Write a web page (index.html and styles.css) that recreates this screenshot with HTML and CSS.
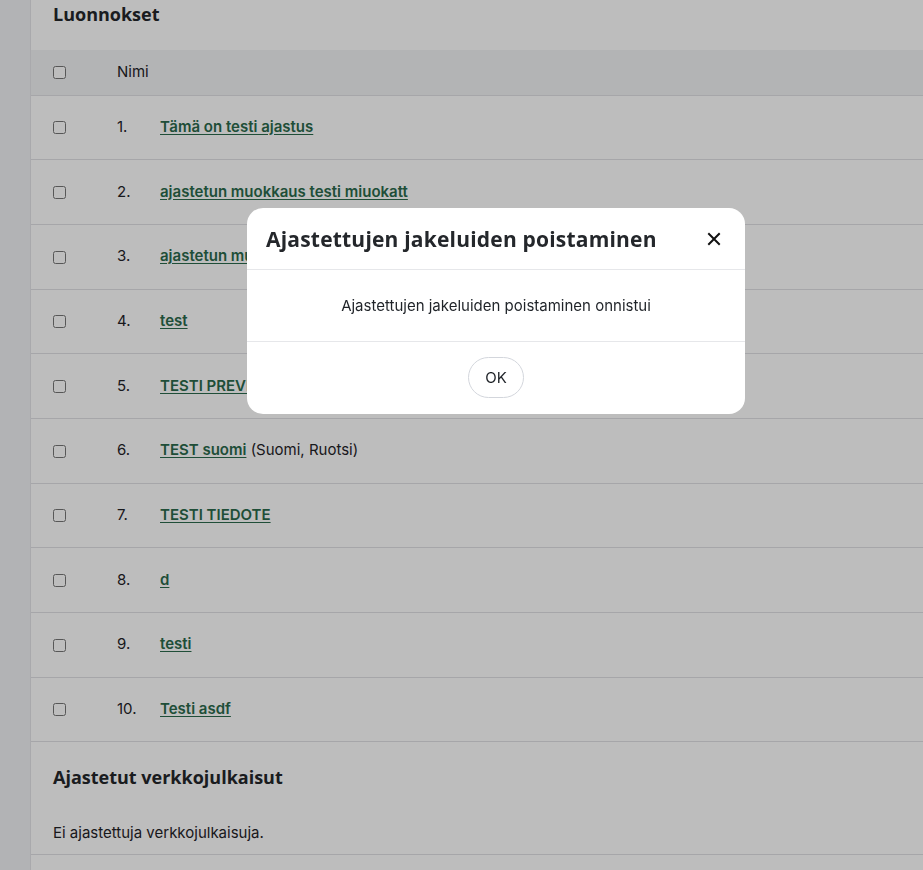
FILE: index.html
```html
<!DOCTYPE html>
<html lang="fi">
  <head>
    <meta charset="UTF-8" />
    <meta name="viewport" content="width=device-width, initial-scale=1.0" />
    <title>Luonnokset</title>
    <link rel="stylesheet" href="styles.css">
  </head>
  <body>
    <div class="layout">
      <aside class="sidebar"></aside>

      <main class="content">
        <!-- Drafts -->
        <section class="drafts">
          <h2 class="section-title">Luonnokset</h2>
          <table class="list">
            <thead>
              <tr>
                <th class="col-check"><input type="checkbox" /></th>
                <th class="col-num">Nimi</th>
                <th></th>
              </tr>
            </thead>
            <tbody>
              <tr><td class="col-check"><input type="checkbox" /></td><td class="col-num">1.</td><td><a href="#">Tämä on testi ajastus</a></td></tr>
              <tr><td class="col-check"><input type="checkbox" /></td><td class="col-num">2.</td><td><a href="#">ajastetun muokkaus testi miuokatt</a></td></tr>
              <tr><td class="col-check"><input type="checkbox" /></td><td class="col-num">3.</td><td><a href="#">ajastetun muokkaus testi</a></td></tr>
              <tr><td class="col-check"><input type="checkbox" /></td><td class="col-num">4.</td><td><a href="#">test</a></td></tr>
              <tr><td class="col-check"><input type="checkbox" /></td><td class="col-num">5.</td><td><a href="#">TESTI PREVIEW</a></td></tr>
              <tr><td class="col-check"><input type="checkbox" /></td><td class="col-num">6.</td><td><a href="#">TEST suomi</a> (Suomi, Ruotsi)</td></tr>
              <tr><td class="col-check"><input type="checkbox" /></td><td class="col-num">7.</td><td><a href="#">TESTI TIEDOTE</a></td></tr>
              <tr><td class="col-check"><input type="checkbox" /></td><td class="col-num">8.</td><td><a href="#">d</a></td></tr>
              <tr><td class="col-check"><input type="checkbox" /></td><td class="col-num">9.</td><td><a href="#">testi</a></td></tr>
              <tr><td class="col-check"><input type="checkbox" /></td><td class="col-num">10.</td><td><a href="#">Testi asdf</a></td></tr>
            </tbody>
          </table>
        </section>

        <!-- Scheduled web publications -->
        <section class="scheduled">
          <h2 class="section-title">Ajastetut verkkojulkaisut</h2>
          <p class="empty">Ei ajastettuja verkkojulkaisuja.</p>
        </section>
      </main>
    </div>

    <!-- Modal -->
    <div class="overlay">
      <div class="modal">
        <div class="modal-header">
          <h3>Ajastettujen jakeluiden poistaminen</h3>
          <button class="close-button" aria-label="Sulje">
            <svg width="14" height="14" viewBox="0 0 14 14">
              <path d="M2 2 L12 12 M12 2 L2 12" stroke="#111" stroke-width="2" stroke-linecap="square" fill="none" />
            </svg>
          </button>
        </div>
        <div class="modal-body">Ajastettujen jakeluiden poistaminen onnistui</div>
        <div class="modal-footer">
          <button class="ok-btn">OK</button>
        </div>
      </div>
    </div>
  </body>
</html>
```

FILE: styles.css
```css
/* General Styles */
body {
  margin: 0;
  padding: 0;
  font-family: Inter, "Noto Sans", sans-serif;
  font-size: 15px;
  color: #1f2328;
  background: #ffffff;
  overflow: hidden;
}

.layout {
  display: flex;
  min-height: 100vh;
}

.sidebar {
  width: 30px;
  flex-shrink: 0;
  background-color: #f1f2f4;
  border-right: 1px solid #e4e5e8;
}

.content {
  flex: 1;
  background-color: #ffffff;
}

.section-title {
  font-family: "Open Sans", Inter, sans-serif;
  font-size: 18px;
  font-weight: 700;
  color: #24272b;
  margin: 0;
  padding: 0 22px;
}

/* Drafts list */
.drafts .section-title {
  height: 50px;
  line-height: 29px;
}

.list {
  width: 100%;
  border-collapse: collapse;
}

.list th,
.list td {
  text-align: left;
  padding: 0 0 2px 0;
  border-bottom: 1px solid #e0e1e4;
  vertical-align: middle;
}

.list thead tr {
  background-color: #f2f3f5;
  height: 45px;
}

.list th {
  font-weight: 400;
}

.list tbody tr {
  height: 64.7px;
}

.col-check {
  width: 64px;
  padding-left: 22px !important;
}

.col-num {
  width: 43px;
}

.list input[type="checkbox"] {
  margin: 0;
  width: 13px;
  height: 13px;
  vertical-align: middle;
}

.list a {
  color: #2b6a4c;
  font-weight: 600;
  text-decoration: underline;
  text-underline-offset: 2px;
}

/* Scheduled section */
.scheduled .section-title {
  padding-top: 23px;
  line-height: 24px;
}

.empty {
  margin: 0;
  padding: 34px 22px 11px;
  line-height: 20px;
  border-bottom: 1px solid #e0e1e4;
}

/* Modal */
.overlay {
  position: fixed;
  inset: 0;
  background-color: rgba(0, 0, 0, 0.26);
}

.modal {
  position: absolute;
  top: 208px;
  left: 247px;
  width: 498px;
  background-color: #ffffff;
  border-radius: 16px;
  overflow: hidden;
}

.modal-header {
  display: flex;
  align-items: center;
  justify-content: space-between;
  height: 61px;
  padding: 0 24px 0 19px;
  border-bottom: 1px solid #e6e7ea;
}

.modal-header h3 {
  margin: 0;
  font-family: "Open Sans", Inter, sans-serif;
  font-size: 21px;
  font-weight: 700;
  letter-spacing: 0.2px;
  color: #24272b;
}

.close-button {
  border: none;
  background: none;
  padding: 0;
  width: 14px;
  height: 14px;
  display: flex;
  cursor: pointer;
}

.modal-body {
  height: 71px;
  line-height: 71px;
  text-align: center;
  border-bottom: 1px solid #e6e7ea;
}

.modal-footer {
  display: flex;
  justify-content: center;
  padding: 15px 0 16px;
}

.ok-btn {
  width: 56px;
  height: 41px;
  border: 1px solid #d3d6dc;
  border-radius: 21px;
  background: #ffffff;
  font-family: Inter, sans-serif;
  font-size: 15px;
  color: #1f2328;
  cursor: pointer;
}
```
